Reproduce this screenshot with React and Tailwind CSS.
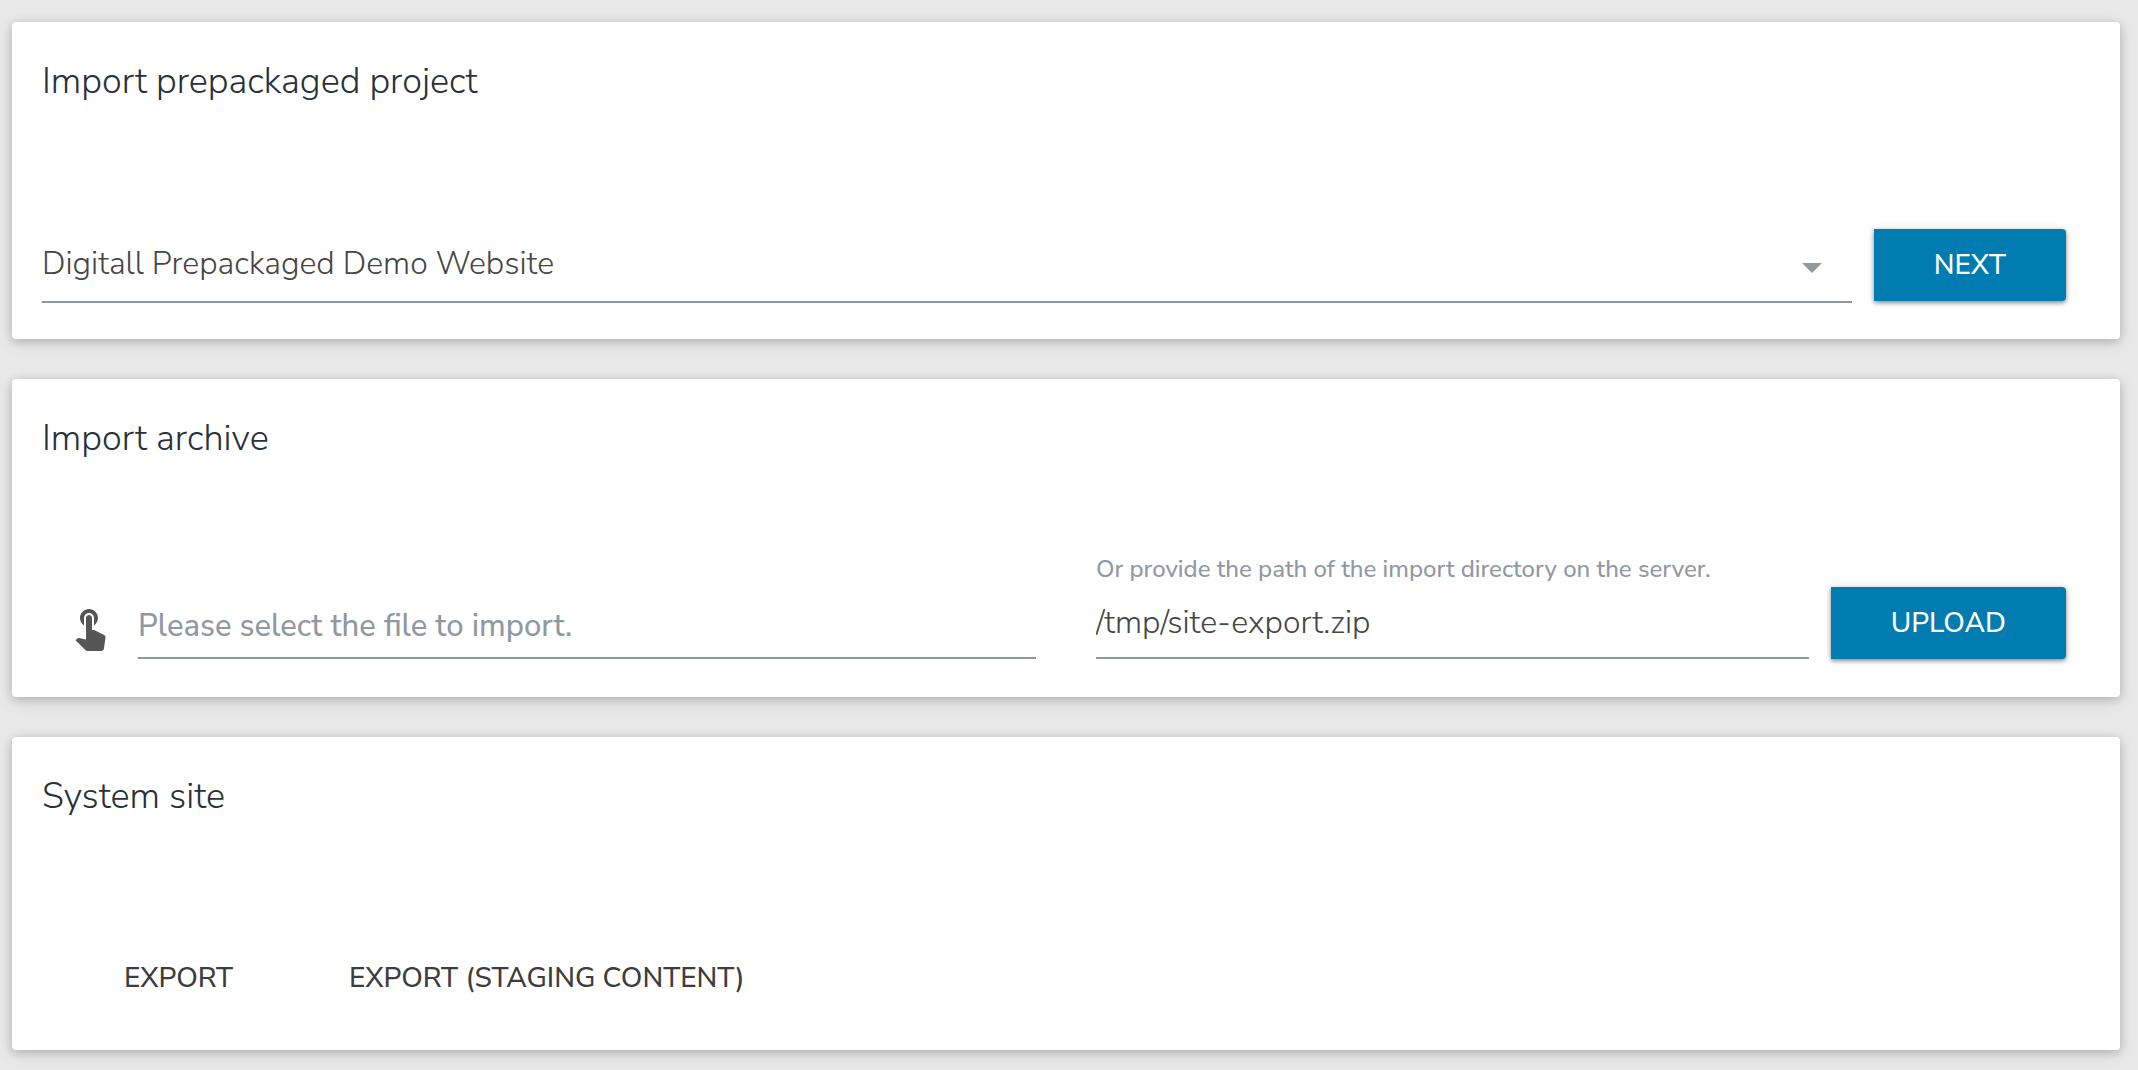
import { useState } from "react";
import { MdArrowDropDown, MdTouchApp } from "react-icons/md";

const Card = ({ title, children }) => (
  <section className="rounded-sm bg-white shadow-[0_2px_10px_rgba(0,0,0,0.16),0_4px_16px_rgba(0,0,0,0.12)]">
    <h2 className="px-[30px] pt-[34px] text-[36px] leading-[52px] font-light text-[#293139]">{title}</h2>
    {children}
  </section>
);

const PrimaryButton = ({ children }) => (
  <button
    type="button"
    className="h-18 shrink-0 rounded-r-sm bg-[#007cb0] px-15 text-[28px] font-medium text-white uppercase shadow-[0_2px_4px_rgba(0,0,0,0.4),0_0_8px_rgba(0,0,0,0.12)]"
  >
    {children}
  </button>
);

const FlatButton = ({ children }) => (
  <button type="button" className="h-18 px-[58px] text-[28px] font-medium text-[#3b3d40] uppercase">
    {children}
  </button>
);

export default function App() {
  const [project, setProject] = useState("digitall");
  const [fileName, setFileName] = useState("");
  const [path, setPath] = useState("/tmp/site-export.zip");

  return (
    <main className="flex min-h-screen flex-col gap-10 bg-[#e9e9e9] pt-[22px] pr-[18px] pb-5 pl-3 font-['Nunito_Sans','Nunito','Lato',sans-serif]">
      <Card title="Import prepackaged project">
        <div className="flex items-start gap-[22px] pt-[121px] pr-[54px] pb-9 pl-[30px]">
          <div className="relative min-w-0 flex-1">
            <select
              aria-label="Prepackaged project"
              value={project}
              onChange={(e) => setProject(e.target.value)}
              className="h-[74px] w-full appearance-none border-b-2 border-[#92989f] bg-transparent pb-0.5 text-[32px] font-light text-[#464646] outline-none"
            >
              <option value="digitall">Digitall Prepackaged Demo Website</option>
            </select>
            <MdArrowDropDown className="pointer-events-none absolute top-[14px] right-4 size-12 text-[#92989f]" />
          </div>
          <PrimaryButton>Next</PrimaryButton>
        </div>
      </Card>

      <Card title="Import archive">
        <div className="grid grid-cols-2 items-end pt-[88px] pb-[38px]">
          <div className="flex items-end gap-6 pr-[30px] pl-[54px]">
            <button type="button" aria-label="Choose a file" className="mb-2 shrink-0 text-[#565656]">
              <MdTouchApp className="size-12" />
            </button>
            <input
              type="text"
              aria-label="File to import"
              placeholder="Please select the file to import."
              value={fileName}
              onChange={(e) => setFileName(e.target.value)}
              className="h-[68px] min-w-0 flex-1 border-b-2 border-[#92989f] pt-1 text-[31px] font-medium text-[#565656] outline-none placeholder:text-[#9298a2]"
            />
          </div>
          <div className="flex items-end gap-[22px] pr-[54px] pl-[30px]">
            <div className="flex min-w-0 flex-1 flex-col">
              <label htmlFor="server-path" className="text-[24px] leading-8 font-medium text-[#9298a2]">
                Or provide the path of the import directory on the server.
              </label>
              <input
                id="server-path"
                type="text"
                value={path}
                onChange={(e) => setPath(e.target.value)}
                className="h-[74px] w-full border-b-2 border-[#92989f] pt-0.5 text-[32px] font-light text-[#464646] outline-none"
              />
            </div>
            <PrimaryButton>Upload</PrimaryButton>
          </div>
        </div>
      </Card>

      <Card title="System site">
        <div className="flex pt-[119px] pr-[54px] pb-9 pl-[54px]">
          <FlatButton>Export</FlatButton>
          <FlatButton>Export (staging content)</FlatButton>
        </div>
      </Card>
    </main>
  );
}
